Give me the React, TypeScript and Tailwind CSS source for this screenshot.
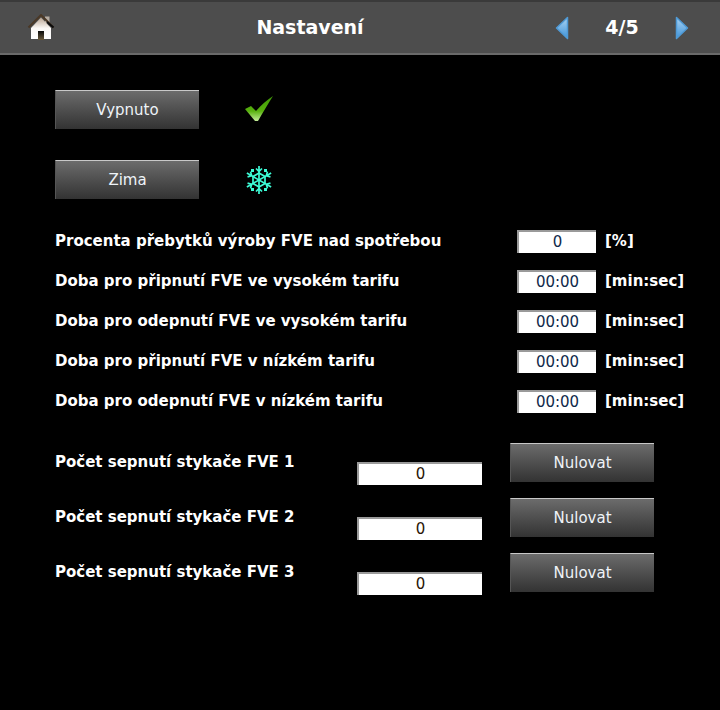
const font = "[font-family:'DejaVu_Sans',Verdana,sans-serif]";

function Home() {
  return (
    <svg width="28" height="28" viewBox="0 0 28 28" className="block">
      <defs>
        <linearGradient id="wall" x1="0" y1="0" x2="0" y2="1">
          <stop offset="0" stopColor="#b9a491" />
          <stop offset="0.5" stopColor="#fbf8f5" />
          <stop offset="1" stopColor="#ffffff" />
        </linearGradient>
        <linearGradient id="door" x1="0" y1="0" x2="0" y2="1">
          <stop offset="0" stopColor="#0a0a0a" />
          <stop offset="1" stopColor="#6b5a3c" />
        </linearGradient>
      </defs>
      <rect x="18" y="2.5" width="4.5" height="7" fill="#b5aca2" />
      <path d="M4 14 L14 3.5 L24 14 L24 25 L4 25 Z" fill="url(#wall)" />
      <path d="M1.5 13.5 L14 1 L26.5 13.5" fill="none" stroke="#4a3826" strokeWidth="2" />
      <path d="M20 8 L26.5 13.5" fill="none" stroke="#0c0c0c" strokeWidth="2" />
      <rect x="11" y="17" width="6" height="9" fill="url(#door)" />
    </svg>
  );
}

function Arrow({ right }: { right?: boolean }) {
  return (
    <svg width="14" height="24" viewBox="0 0 14 24" className="block">
      <defs>
        <linearGradient id={right ? "ar" : "al"} x1="0" y1="0" x2="0" y2="1">
          <stop offset="0" stopColor="#a9d2f2" />
          <stop offset="1" stopColor="#3f93d8" />
        </linearGradient>
      </defs>
      <path
        d={right ? "M1.5 1.5 L12.5 12 L1.5 22.5 Z" : "M12.5 1.5 L1.5 12 L12.5 22.5 Z"}
        fill={`url(#${right ? "ar" : "al"})`}
        stroke="#4f9ad6"
        strokeWidth="1.5"
        strokeLinejoin="round"
      />
    </svg>
  );
}

function Check() {
  return (
    <svg width="30" height="28" viewBox="0 0 30 28" className="block">
      <defs>
        <linearGradient id="chk" x1="0" y1="0" x2="0" y2="1">
          <stop offset="0" stopColor="#3f9a06" />
          <stop offset="0.6" stopColor="#58b00e" />
          <stop offset="1" stopColor="#c4ec9a" />
        </linearGradient>
      </defs>
      <path d="M1 13 L7 10 L12 15 C17 9 23 4 29 0 C24 8 19 16 14 25 L11 25 Z" fill="url(#chk)" />
    </svg>
  );
}

function Snow() {
  const arm = "M15 1 V29 M12 3.5 L15 6.5 L18 3.5 M12 26.5 L15 23.5 L18 26.5";
  return (
    <svg width="30" height="30" viewBox="0 0 30 30" className="block" fill="none" stroke="#3dfbd6" strokeWidth="1.7">
      <path d={arm} />
      <path d={arm} transform="rotate(60 15 15)" />
      <path d={arm} transform="rotate(120 15 15)" />
      <path d="M15 8 L21 11.5 V18.5 L15 22 L9 18.5 V11.5 Z" />
      <g fill="#3dfbd6" stroke="none">
        <rect x="7" y="4" width="3" height="3" />
        <rect x="20" y="4" width="3" height="3" />
        <rect x="7" y="23" width="3" height="3" />
        <rect x="20" y="23" width="3" height="3" />
      </g>
    </svg>
  );
}

function Btn({ children }: { children: string }) {
  return (
    <div className="w-[144px] h-[39px] shrink-0 flex items-center justify-center bg-gradient-to-b from-[#6c6c6c] to-[#333333] border-t border-t-[#c8c8c8] border-l border-l-[#555555] text-[15px] text-[#eef3f8]">
      {children}
    </div>
  );
}

function Field({ value, w, color }: { value: string; w: string; color: string }) {
  return (
    <div className={`${w} h-[23px] shrink-0 bg-white border-t-2 border-t-[#9a9a9a] border-l-2 border-l-[#9a9a9a] flex items-center justify-center text-[15px] ${color}`}>
      {value}
    </div>
  );
}

const timeRows = [
  ["Procenta přebytků výroby FVE nad spotřebou", "0", "[%]"],
  ["Doba pro připnutí FVE ve vysokém tarifu", "00:00", "[min:sec]"],
  ["Doba pro odepnutí FVE ve vysokém tarifu", "00:00", "[min:sec]"],
  ["Doba pro připnutí FVE v nízkém tarifu", "00:00", "[min:sec]"],
  ["Doba pro odepnutí FVE v nízkém tarifu", "00:00", "[min:sec]"],
];

export default function App() {
  return (
    <div className={`w-[720px] h-[710px] bg-black overflow-hidden text-white ${font}`}>
      <header className="h-[55px] bg-[#4d4d4d] border-t-2 border-t-[#3a3a3a] border-b-2 border-b-[#6a6a6a] flex items-center pl-[27px] pr-[31px]">
        <Home />
        <div className="flex-1 text-center text-[19px] font-bold pl-[10px]">Nastavení</div>
        <div className="flex items-center">
          <Arrow />
          <span className="w-[106px] text-center text-[19px] font-bold">4/5</span>
          <Arrow right />
        </div>
      </header>

      <main className="pl-[55px] pt-[35px]">
        <div className="flex items-center gap-[45px] h-[39px]">
          <Btn>Vypnuto</Btn>
          <Check />
        </div>
        <div className="flex items-center gap-[45px] h-[39px] mt-[31px]">
          <Btn>Zima</Btn>
          <Snow />
        </div>

        <div className="mt-[31px] flex flex-col gap-[17px]">
          {timeRows.map(([label, value, unit]) => (
            <div key={label} className="flex items-center h-[23px] font-bold text-[15px]">
              <span className="w-[462px] shrink-0 whitespace-nowrap">{label}</span>
              <Field value={value} w="w-[79px]" color="text-[#102a4a] font-normal" />
              <span className="ml-[9px] whitespace-nowrap">{unit}</span>
            </div>
          ))}
        </div>

        <div className="mt-[30px] flex flex-col gap-[16px]">
          {["1", "2", "3"].map((n) => (
            <div key={n} className="flex items-center h-[39px]">
              <span className="w-[302px] shrink-0 font-bold text-[15px] whitespace-nowrap">Počet sepnutí stykače FVE {n}</span>
              <div className="mt-[21px] -mb-px">
                <Field value="0" w="w-[125px]" color="text-[#2a1505]" />
              </div>
              <div className="ml-[28px]">
                <Btn>Nulovat</Btn>
              </div>
            </div>
          ))}
        </div>
      </main>
    </div>
  );
}
